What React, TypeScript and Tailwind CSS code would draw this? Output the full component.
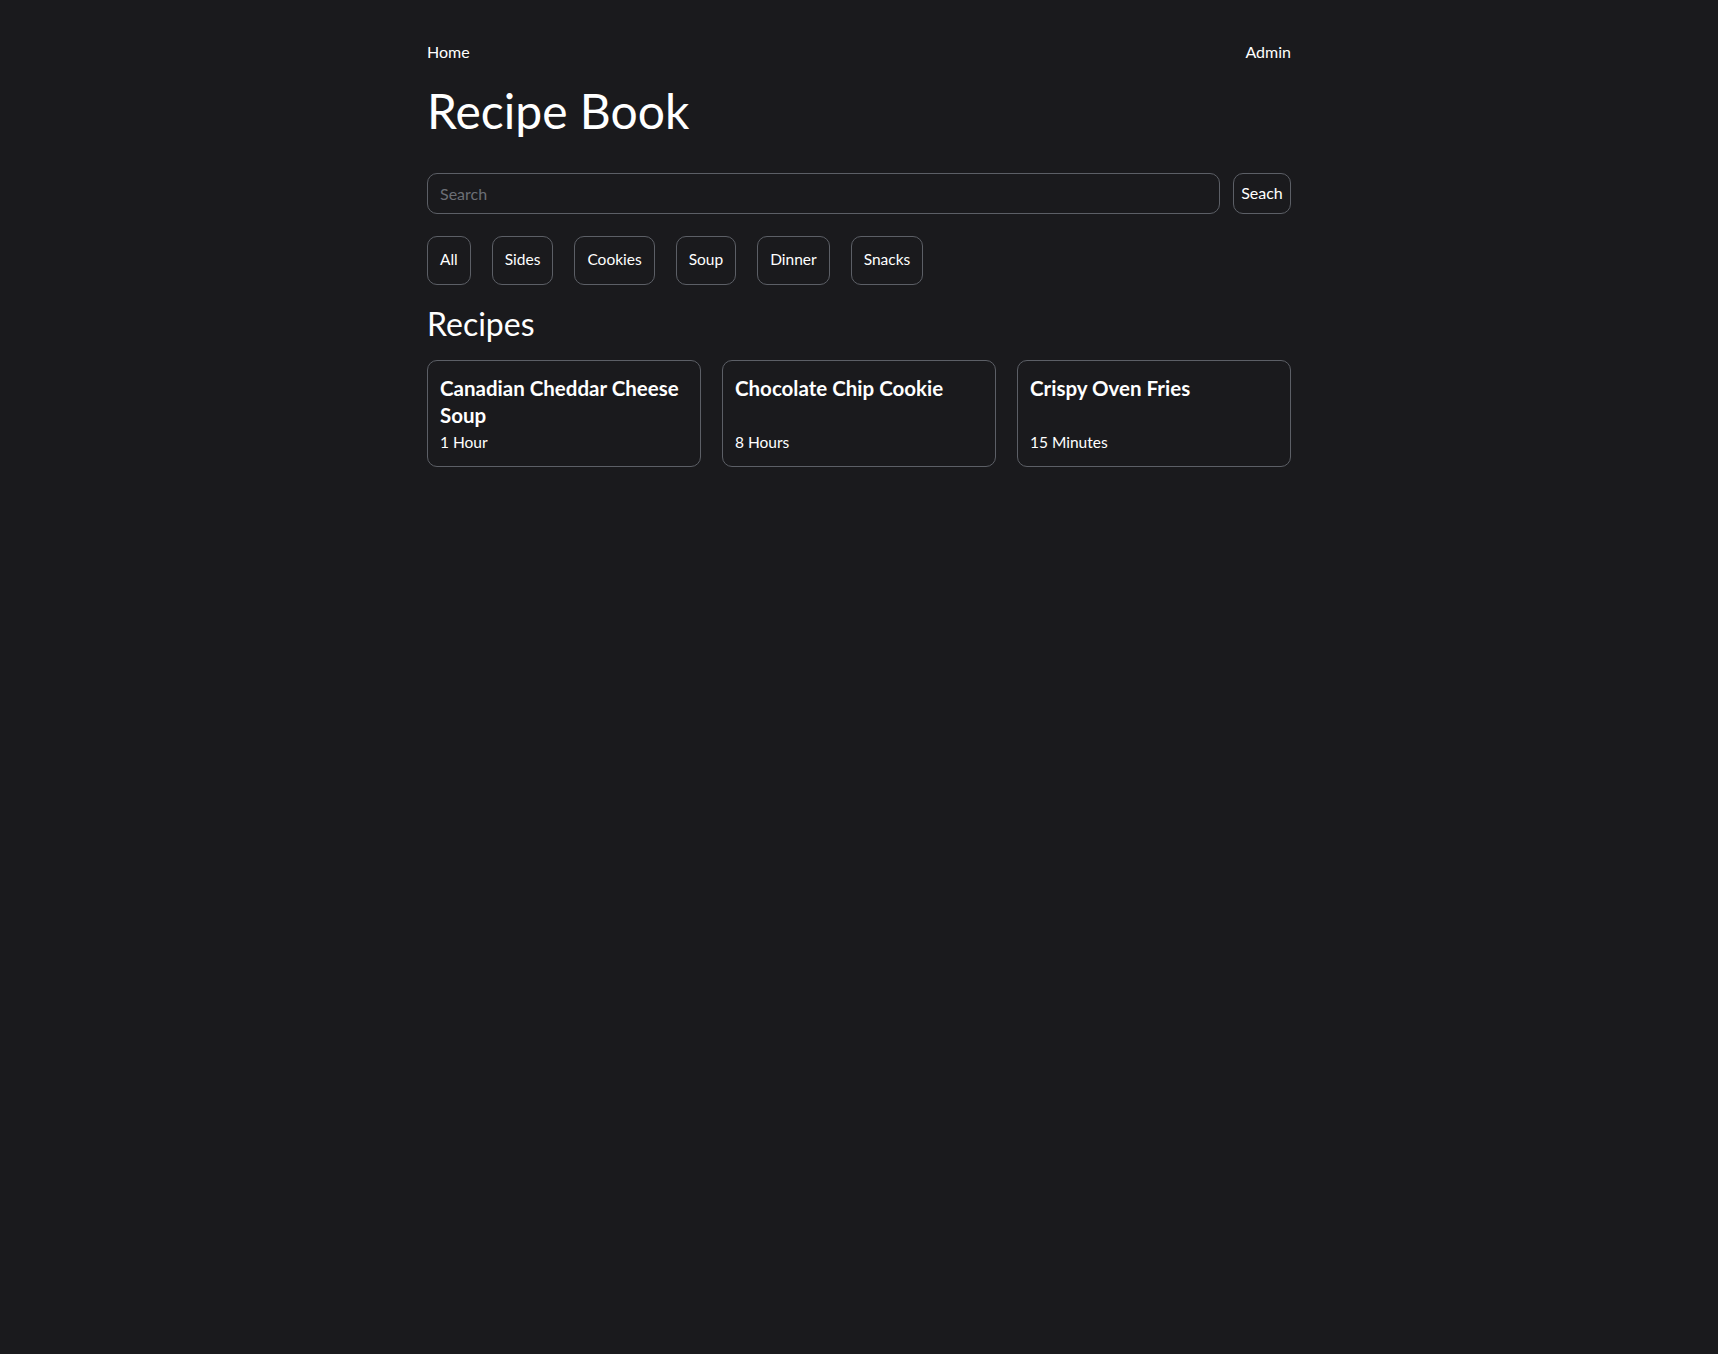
import { useState } from "react";

type Recipe = {
  id: number;
  title: string;
  time: string;
  category: string;
};

const categories = ["All", "Sides", "Cookies", "Soup", "Dinner", "Snacks"];

const recipes: Recipe[] = [
  { id: 1, title: "Canadian Cheddar Cheese Soup", time: "1 Hour", category: "Soup" },
  { id: 2, title: "Chocolate Chip Cookie", time: "8 Hours", category: "Cookies" },
  { id: 3, title: "Crispy Oven Fries", time: "15 Minutes", category: "Sides" },
];

export default function App() {
  const [query, setQuery] = useState("");
  const [cat, setCat] = useState("All");

  const shown = recipes.filter((r) => cat === "All" || r.category === cat);

  return (
    <div className="min-h-[1354px] bg-[#1a1a1d] text-white [font-family:Lato,'Open_Sans',sans-serif]">
      <div className="mx-auto w-[864px] pt-[40px]">
        <nav className="flex h-6 items-center justify-between text-[16px]">
          <a href="#">Home</a>
          <a href="#">Admin</a>
        </nav>

        <h1 className="mt-[18px] text-[48px] leading-[1.2]">Recipe Book</h1>

        <form
          className="mt-[33px] flex gap-[13px]"
          onSubmit={(e) => e.preventDefault()}
        >
          <input
            className="h-[41px] flex-1 rounded-[10px] border border-[#5c5f66] bg-transparent px-3 text-[16px] text-white outline-none placeholder:text-[#6c6f76]"
            placeholder="Search"
            value={query}
            onChange={(e) => setQuery(e.target.value)}
          />
          <button
            type="submit"
            className="h-[41px] w-[58px] rounded-[10px] border border-[#5c5f66] text-[16px]"
          >
            Seach
          </button>
        </form>

        <div className="mt-[22px] flex gap-[21px]">
          {categories.map((c) => (
            <button
              key={c}
              type="button"
              onClick={() => setCat(c)}
              className="flex h-[49px] items-center rounded-[10px] border border-[#5c5f66] px-3 text-[15.5px]"
            >
              {c}
            </button>
          ))}
        </div>

        <h2 className="mt-[20px] text-[32px] leading-[1.2]">Recipes</h2>

        <div className="mt-[17px] grid grid-cols-3 gap-[21px]">
          {shown.map((r) => (
            <div
              key={r.id}
              className="flex flex-col justify-between rounded-[10px] border border-[#5c5f66] px-3 pt-[14px] pb-[12px]"
            >
              <h3 className="text-[20.5px] font-bold leading-[27.5px]">{r.title}</h3>
              <p className="text-[15.5px] leading-6">{r.time}</p>
            </div>
          ))}
        </div>
      </div>
    </div>
  );
}
